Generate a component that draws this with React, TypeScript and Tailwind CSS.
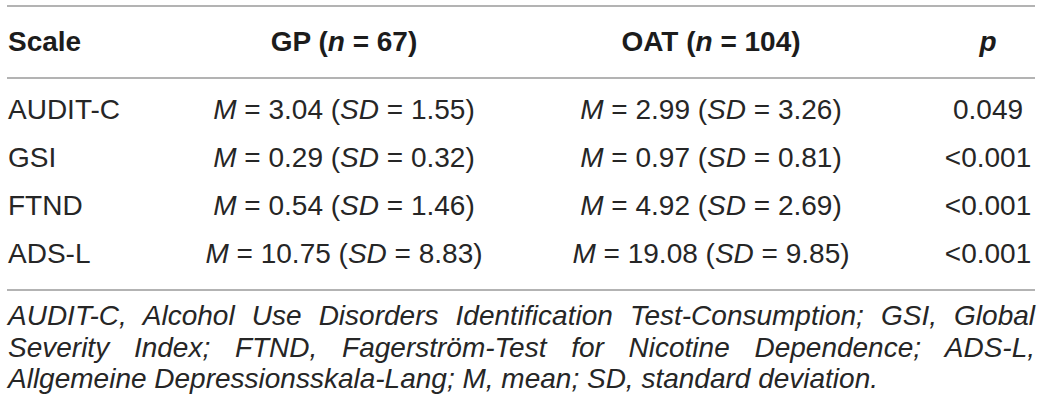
const rows = [
  { scale: "AUDIT-C", gp: ["3.04", "1.55"], oat: ["2.99", "3.26"], p: "0.049" },
  { scale: "GSI", gp: ["0.29", "0.32"], oat: ["0.97", "0.81"], p: "<0.001" },
  { scale: "FTND", gp: ["0.54", "1.46"], oat: ["4.92", "2.69"], p: "<0.001" },
  { scale: "ADS-L", gp: ["10.75", "8.83"], oat: ["19.08", "9.85"], p: "<0.001" },
];

function Stat({ m, sd }: { m: string; sd: string }) {
  return (
    <span>
      <i>M</i> = {m} (<i>SD</i> = {sd})
    </span>
  );
}

export default function App() {
  return (
    <div
      className="w-[1042px] h-[413px] bg-white px-[7px] pt-[5px] text-[#262626] overflow-hidden"
      style={{ fontFamily: '"Liberation Sans", Arial, sans-serif' }}
    >
      <div className="border-t-2 border-[#b3b3b3]" />

      <div className="grid grid-cols-[186px_302px_432px_110px] h-[70px] items-center text-[28px] font-bold text-[#1c1c1c]">
        <div className="pl-px">Scale</div>
        <div className="text-center">
          GP (<i>n</i> = 67)
        </div>
        <div className="text-center">
          OAT (<i>n</i> = 104)
        </div>
        <div className="text-center pl-3">
          <i>p</i>
        </div>
      </div>

      <div className="border-t-2 border-[#b3b3b3]" />

      <div className="pt-[7px] pb-[11px] text-[28px]">
        {rows.map((r) => (
          <div
            key={r.scale}
            className="grid grid-cols-[186px_302px_432px_110px] h-[48px] items-center"
          >
            <div className="pl-px">{r.scale}</div>
            <div className="text-center">
              <Stat m={r.gp[0]} sd={r.gp[1]} />
            </div>
            <div className="text-center">
              <Stat m={r.oat[0]} sd={r.oat[1]} />
            </div>
            <div className="text-center pl-3">{r.p}</div>
          </div>
        ))}
      </div>

      <div className="border-t-2 border-[#b3b3b3]" />

      <p className="mt-[9px] text-[28px] leading-[31.7px] italic text-justify pl-px">
        AUDIT-C, Alcohol Use Disorders Identification Test-Consumption; GSI,
        Global Severity Index; FTND, Fagerström-Test for Nicotine Dependence;
        ADS-L, Allgemeine Depressionsskala-Lang; M, mean; SD, standard
        deviation.
      </p>
    </div>
  );
}
